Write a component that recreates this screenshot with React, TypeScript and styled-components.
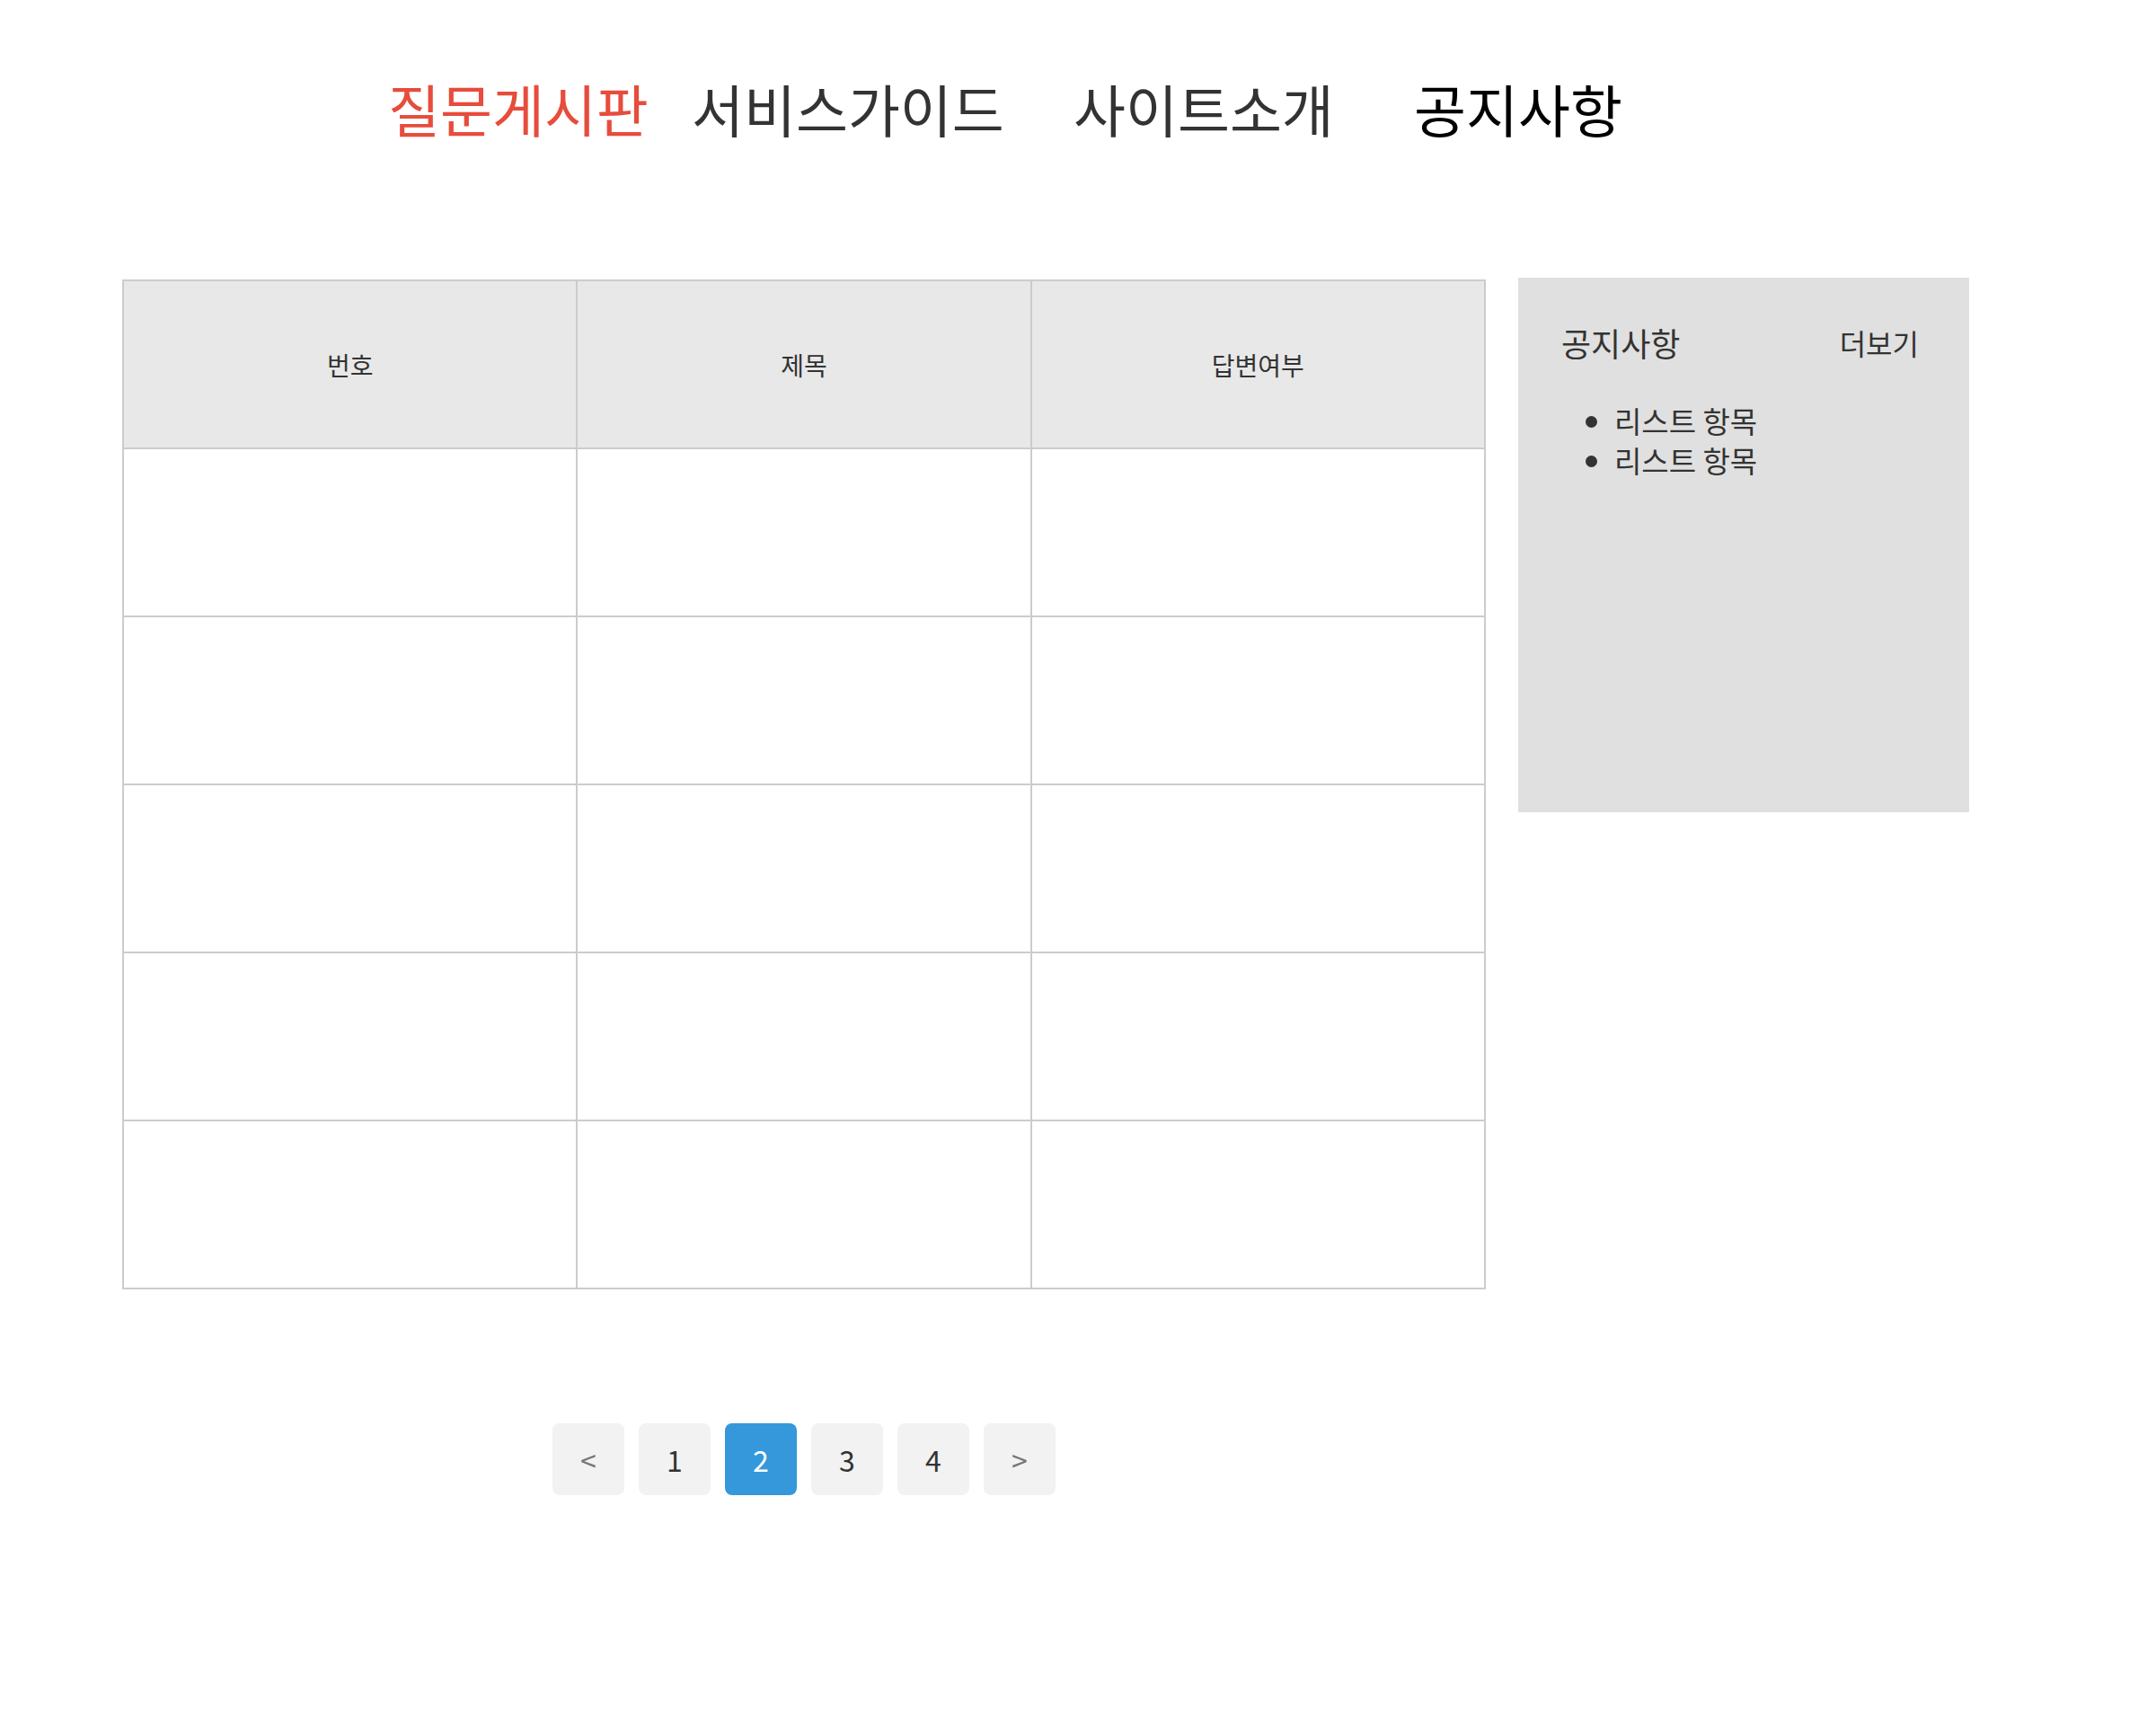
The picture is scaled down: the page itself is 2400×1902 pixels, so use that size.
import React from 'react'
import styled, { createGlobalStyle } from 'styled-components'

const GlobalStyle = createGlobalStyle`
    body {
        margin: 0;
        background: #ffffff;
        font-family: "Noto Sans CJK KR", "Noto Sans", sans-serif;
        color: #333333;
    }
`;

const Page = styled.div`
    width: 2400px;
    min-height: 1902px;
`;

const Nav = styled.nav`
    display: grid;
    grid-template-columns: 338px 425px 379px auto;
    align-items: center;
    padding: 74px 0 0 432px;
    height: 90px;
`;

const NavItem = styled.a<{ $color: string }>`
    font-size: 63px;
    line-height: normal;
    color: ${props => props.$color};
    text-decoration: none;
    white-space: nowrap;
`;

const Main = styled.main`
    display: flex;
    align-items: flex-start;
    gap: 36px;
    padding: 145px 0 0 136px;
`;

const BoardColumn = styled.section`
    width: 1518px;
    display: flex;
    flex-direction: column;
    margin-top: 2px;
`;

const Board = styled.table`
    width: 100%;
    border: 1px solid #cccccc;
    border-spacing: 0;
    table-layout: fixed;
`;

const HeadCell = styled.th`
    height: 185px;
    padding: 0;
    border: 1px solid #cccccc;
    background: #e8e8e8;
    font-size: 28px;
    font-weight: 400;
    color: #333333;
    text-align: center;
`;

const Cell = styled.td`
    height: 185px;
    padding: 0;
    border: 1px solid #cccccc;
    background: #ffffff;
`;

const Pagination = styled.div`
    display: flex;
    justify-content: center;
    gap: 16px;
    margin-top: 149px;
`;

const PageButton = styled.button<{ $active?: boolean; $arrow?: boolean }>`
    width: 80px;
    height: 80px;
    border: none;
    border-radius: 8px;
    padding: 0;
    font-family: "Noto Sans CJK KR", "Noto Sans", sans-serif;
    font-size: 32px;
    background: ${props => (props.$active ? '#3498db' : '#f2f2f2')};
    color: ${props => (props.$active ? '#ffffff' : props.$arrow ? '#777777' : '#333333')};
    cursor: pointer;
`;

const NoticePanel = styled.aside`
    width: 502px;
    height: 595px;
    box-sizing: border-box;
    background: #e0e0e0;
    padding: 46px 56px 0 48px;
`;

const NoticeHeader = styled.div`
    display: flex;
    justify-content: space-between;
    align-items: center;
`;

const NoticeTitle = styled.h2`
    margin: 0;
    font-size: 36px;
    font-weight: 400;
    color: #333333;
`;

const MoreLink = styled.a`
    font-size: 32px;
    color: #333333;
    text-decoration: none;
`;

const NoticeList = styled.ul`
    margin: 39px 0 0;
    padding-left: 59px;
    font-size: 33px;
    line-height: 44px;
    color: #333333;
`;

const navItems = [
    { label: '질문게시판', color: '#e74c3c' },
    { label: '서비스가이드', color: '#333333' },
    { label: '사이트소개', color: '#333333' },
    { label: '공지사항', color: '#000000' },
];

const columns = ['번호', '제목', '답변여부'];
const rows = [1, 2, 3, 4, 5];
const pages = [1, 2, 3, 4];

const App = () => {
    const currentPage = 2;

    return (
        <>
            <GlobalStyle />
            <Page>
                <Nav>
                    {navItems.map((item) => (
                        <NavItem key={item.label} href="#" $color={item.color}>
                            {item.label}
                        </NavItem>
                    ))}
                </Nav>
                <Main>
                    <BoardColumn>
                        <Board>
                            <thead>
                                <tr>
                                    {columns.map((col) => (
                                        <HeadCell key={col}>{col}</HeadCell>
                                    ))}
                                </tr>
                            </thead>
                            <tbody>
                                {rows.map((row) => (
                                    <tr key={row}>
                                        {columns.map((col) => (
                                            <Cell key={col} />
                                        ))}
                                    </tr>
                                ))}
                            </tbody>
                        </Board>
                        <Pagination>
                            <PageButton $arrow>&lt;</PageButton>
                            {pages.map((page) => (
                                <PageButton key={page} $active={page === currentPage}>
                                    {page}
                                </PageButton>
                            ))}
                            <PageButton $arrow>&gt;</PageButton>
                        </Pagination>
                    </BoardColumn>
                    <NoticePanel>
                        <NoticeHeader>
                            <NoticeTitle>공지사항</NoticeTitle>
                            <MoreLink href="#">더보기</MoreLink>
                        </NoticeHeader>
                        <NoticeList>
                            <li>리스트 항목</li>
                            <li>리스트 항목</li>
                        </NoticeList>
                    </NoticePanel>
                </Main>
            </Page>
        </>
    );
}

export default App;
